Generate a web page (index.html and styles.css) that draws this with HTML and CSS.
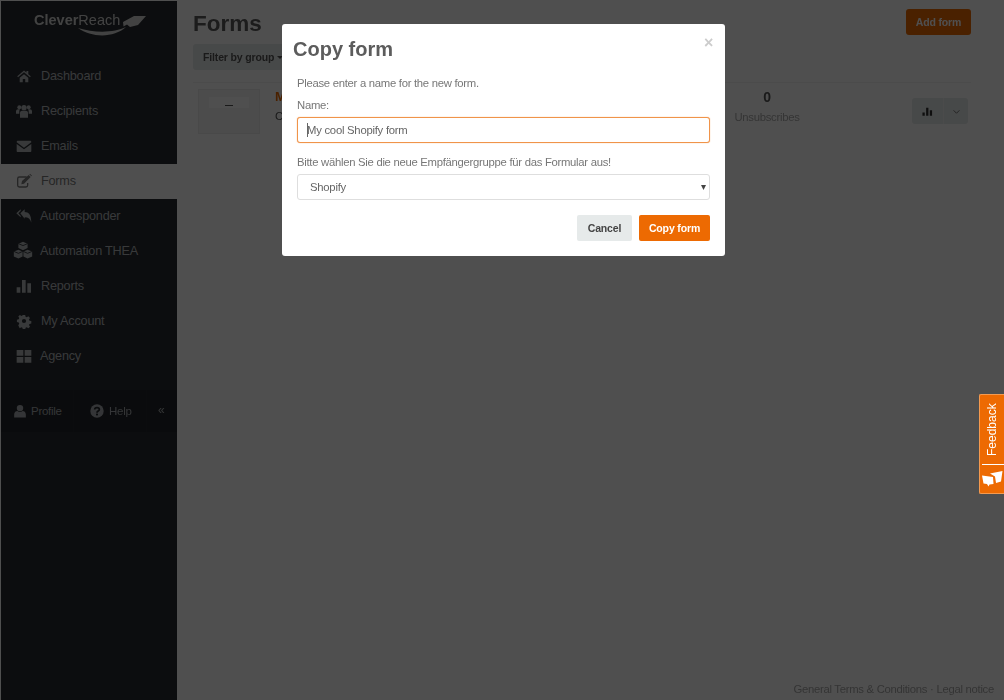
FILE: index.html
```html
<!DOCTYPE html>
<html lang="en">
<head>
<meta charset="utf-8">
<title>Forms</title>
<link rel="stylesheet" href="styles.css">
</head>
<body>
<div class="app">
  <aside class="sidebar">
    <div class="logo">
      <span class="logo-text"><b>Clever</b>Reach</span>
      <svg class="logo-mark" viewBox="0 0 112 24" width="112" height="24">
        <path d="M44 14C58 24 80 24 92 13 80 19 60 19 44 14Z"/>
        <path d="M89 8 100 2H112L104 11 96 13 93 10.500 89.500 12.500Z"/>
      </svg>
    </div>
    <nav class="nav">
      <a class="nav-item"><svg class="ico" viewBox="-1 -1 26 26"><path d="M12 3 1 12.500l1.300 1.500L12 6l9.700 8L23 12.500l-4-3.400V4h-3v2.500zM5 15l7-5.800 7 5.800v7h-5v-5h-4v5H5z"/></svg><span>Dashboard</span></a>
      <a class="nav-item"><svg class="ico" viewBox="0 0 24 24"><circle cx="5" cy="6.500" r="3"/><circle cx="19" cy="6.500" r="3"/><circle cx="12" cy="7" r="4"/><path d="M0 16v-3.500c0-2 1.500-3 3-3h3a5 5 0 0 0-1 3V16zM24 16v-3.500c0-2-1.500-3-3-3h-3a5 5 0 0 1 1 3V16zM6 22v-7.500c0-2 1.500-3 3-3h6c1.500 0 3 1 3 3V22z"/></svg><span>Recipients</span></a>
      <a class="nav-item"><svg class="ico" viewBox="0 0 24 24"><path d="M1 6.500V6C1 4.800 1.800 4 3 4h18c1.200 0 2 .8 2 2v.5l-11 8zM1 9l11 8 11-8v10.500c0 .8-.7 1.500-1.500 1.500h-19C1.700 21 1 20.300 1 19.500z"/></svg><span>Emails</span></a>
      <a class="nav-item is-active"><svg class="ico" viewBox="0 0 24 24"><path d="M5 5h11v2H5a1.500 1.500 0 0 0-1.500 1.500v10A1.500 1.500 0 0 0 5 20h10a1.500 1.500 0 0 0 1.500-1.500V15h2v3.500A3.500 3.500 0 0 1 15 22H5a3.500 3.500 0 0 1-3.500-3.500v-10A3.500 3.500 0 0 1 5 5z"/><path d="M9 12 19 3l3 3-10 10-4 .9zM20 2l1-1 3 3-1 1z"/></svg><span>Forms</span></a>
      <a class="nav-item nudge"><svg class="ico" viewBox="0 0 24 24"><path d="M7 2v2.500L3.500 8 7 11.500V14L.5 8zM13 2v4c6 0 10 4 10 16-1.500-5.500-4.500-8-10-8v2L6.500 8z"/></svg><span>Autoresponder</span></a>
      <a class="nav-item nudge"><svg class="ico wide" viewBox="0 0 24 24"><path d="M12 1l5.500 2.200v5.300L12 11 6.500 8.500V3.200zM6.500 10.500l5 2v6l-5 2.500L1 18.500v-6zM17.500 10.500l5.500 2v6L17.500 21l-5-2.500v-6z"/><path class="cube-line" d="M6.500 3.200 12 5.500l5.500-2.300M1 12.500l5.500 2.300 5-2.300M12.500 12.500l5 2.300 5.500-2.300"/></svg><span>Automation THEA</span></a>
      <a class="nav-item"><svg class="ico" viewBox="0 0 24 24"><path d="M1 14h5.500v8H1zM9 3h5.500v19H9zM17 8h5.500v14H17z"/></svg><span>Reports</span></a>
      <a class="nav-item"><svg class="ico" viewBox="0 0 24 24"><path fill-rule="evenodd" d="M10 2h4l.6 3 2 .9 2.600-1.700 2.800 2.800-1.700 2.600.9 2 3 .6v4l-3 .6-.9 2 1.700 2.600-2.800 2.800-2.600-1.700-2 .9-.6 3h-4l-.6-3-2-.9-2.600 1.700L2.400 19l1.700-2.600-.9-2-3-.6v-4l3-.6.9-2L2.400 4.600 5.200 1.800l2.600 1.700 2-.9zM12 8.500a3.500 3.500 0 1 0 0 7 3.500 3.500 0 0 0 0-7z" transform="translate(1.200 1.200) scale(.9)"/></svg><span>My Account</span></a>
      <a class="nav-item nudge"><svg class="ico" viewBox="0 0 24 24"><path d="M1 3h10v8.500H1zM13 3h10v8.500H13zM1 13.500h10V22H1zM13 13.500h10V22H13z"/></svg><span>Agency</span></a>
    </nav>
    <div class="side-foot">
      <a class="foot-link"><svg class="ico small" viewBox="0 0 24 24"><circle cx="12" cy="7" r="5.500"/><path d="M2 23v-5c0-4 3-6 5.500-6 3 2 6 2 9 0 2.500 0 5.500 2 5.500 6v5z"/></svg><span>Profile</span></a>
      <a class="foot-link help"><svg class="ico small" viewBox="0 0 24 24"><circle cx="12" cy="12" r="11.500"/><path class="q" d="M8 9.500C8 7 10 6 12 6s4 1.200 4 3.300c0 3-4 2.700-4 5.700"/><rect class="q-dot" x="10.300" y="16.500" width="3.400" height="3"/></svg><span>Help</span></a>
      <a class="foot-toggle">«</a>
    </div>
  </aside>

  <main class="main">
    <header class="page-head">
      <h1>Forms</h1>
      <button class="btn-add">Add form</button>
    </header>
    <div class="toolbar"><button class="btn-filter">Filter by group <i class="caret"></i></button></div>
    <section class="form-row">
      <div class="thumb"><div class="thumb-band"><i></i></div></div>
      <div class="form-info">
        <a class="form-name">My cool form</a>
        <span class="form-meta">Created</span>
      </div>
      <div class="stat"><strong>0</strong><span>Unsubscribes</span></div>
      <div class="row-actions">
        <button class="act"><svg viewBox="0 0 24 24" width="11" height="11"><path d="M1 14h5v7H1zM9 4h5v17H9zM17 9h5v12h-5z"/></svg></button>
        <button class="act act-more"><svg viewBox="0 0 12 12" width="7" height="7"><path d="M1 4l5 5 5-5" fill="none" stroke="currentColor" stroke-width="1.500"/></svg></button>
      </div>
    </section>
    <footer class="page-foot">General Terms &amp; Conditions · Legal notice</footer>
  </main>
</div>

<div class="backdrop"></div>

<div class="modal">
  <span class="close">×</span>
  <h2>Copy form</h2>
  <p class="intro">Please enter a name for the new form.</p>
  <label class="lbl" for="name">Name:</label>
  <div class="input-wrap">
    <input id="name" class="field field-focus" type="text" value="My cool Shopify form">
    <i class="text-caret"></i>
  </div>
  <label class="lbl lbl-gap" for="group">Bitte wählen Sie die neue Empfängergruppe für das Formular aus!</label>
  <div class="select-wrap">
    <select id="group" class="field field-select"><option>Shopify</option></select>
    <i class="select-arrow">▾</i>
  </div>
  <div class="modal-actions">
    <button class="btn btn-cancel">Cancel</button>
    <button class="btn btn-copy">Copy form</button>
  </div>
</div>

<aside class="feedback">
  <span class="feedback-text">Feedback</span>
  <svg class="feedback-icon" viewBox="0 0 22 18" width="22" height="18"><path d="M9 3.500 21.500 1 20 11.500l-5 1.500-1-6.500z"/><path d="M1 5.500l11 1.500.5 7-4 .5-1 2-1.500-2.500L2.500 13.500z"/></svg>
</aside>
</body>
</html>
```
FILE: styles.css
```css
* { box-sizing: border-box; }
html, body { height: 100%; }
body {
  margin: 0;
  padding: 1px 0 0 1px;
  background: #fff;
  color: #555;
  font-family: "Liberation Sans", Arial, sans-serif;
  font-size: 11.300px;
  letter-spacing: -.28px;
  overflow: hidden;
}
.app { display: flex; height: 699px; filter: blur(.35px); }

/* sidebar */
.sidebar {
  width: 176px;
  flex: none;
  background: #282b30;
  display: flex;
  flex-direction: column;
}
.logo { height: 58px; position: relative; padding: 10px 0 0 33px; color: #d6d6d6; }
.logo-text { font-size: 14.500px; line-height: 18px; display: block; letter-spacing: 0; }
.logo-mark { position: absolute; left: 33px; top: 13px; fill: currentColor; }
.nav { display: flex; flex-direction: column; }
.nav-item {
  height: 35px;
  display: flex;
  align-items: center;
  gap: 9px;
  padding: 0 0 2px 15px;
  font-size: 12.700px;
  letter-spacing: -.22px;
  color: #b4b8bc;
}
.nav-item.is-active { background: #fff; color: #7a7a7a; }
.nav-item.nudge { gap: 8px; }
.ico { width: 16px; height: 16px; fill: currentColor; flex: none; }
.ico.wide { width: 20px; height: 20px; margin: 0 -1px 0 -3px; }
.cube-line { fill: none; stroke: #282b30; stroke-width: 1; }
.side-foot {
  margin-top: 16px;
  height: 42px;
  background: #23262a;
  display: flex;
  align-items: center;
  color: #a8acb0;
  font-size: 11.500px;
}
.foot-link { display: flex; align-items: center; gap: 4px; height: 100%; }
.foot-link:first-child { width: 73px; padding-left: 12px; border-right: 1px solid #26292d; }
.foot-link.help { width: 73px; padding-left: 16px; gap: 5px; border-right: 1px solid #26292d; }
.ico.small { width: 14px; height: 14px; }
.q { fill: none; stroke: #23262a; stroke-width: 3; }
.q-dot { fill: #23262a; }
.foot-toggle { margin-left: 11px; font-size: 12px; line-height: 12px; padding-bottom: 3px; }

/* main */
.main { flex: 1; display: flex; flex-direction: column; padding: 8px 33px 0 16px; min-width: 0; }
.page-head { display: flex; justify-content: space-between; align-items: flex-start; }
h1 { margin: 0; font-size: 22.500px; line-height: 30px; color: #5c5c5c; font-weight: bold; letter-spacing: 0; }
.btn-add {
  width: 65px;
  height: 26px;
  border: 0;
  border-radius: 3px;
  background: #ed6a02;
  color: #fff;
  font: bold 10.500px "Liberation Sans", Arial, sans-serif;
  letter-spacing: -.15px;
  padding: 0 0 1px;
}
.toolbar { margin-top: 5px; padding-bottom: 12px; border-bottom: 1px solid #f2f2f2; }
.btn-filter {
  width: 110px;
  height: 26px;
  border: 0;
  border-radius: 3px;
  background: #e6eaea;
  color: #555;
  font: bold 10.500px "Liberation Sans", Arial, sans-serif;
  letter-spacing: -.15px;
  text-align: left;
  padding: 0 0 0 10px;
}
.caret { display: inline-block; border: 3px solid transparent; border-top-color: #555; border-bottom: 0; vertical-align: 2px; }
.form-row { display: flex; align-items: flex-start; padding: 6px 3px 0 5px; }
.thumb {
  width: 62px;
  height: 45px;
  flex: none;
  border: 1px solid #ebebeb;
  background: #f6f6f6;
  padding-top: 7px;
}
.thumb-band { height: 11px; margin: 0 10px; background: #fff; display: flex; align-items: flex-end; justify-content: center; }
.thumb-band i { width: 8px; height: 1px; background: #555; margin-bottom: 2px; }
.form-info { width: 472px; flex: none; padding: 0 0 0 15px; display: flex; flex-direction: column; gap: 4px; }
.form-name { color: #ed6a02; font-weight: bold; font-size: 13px; line-height: 16px; }
.form-meta { line-height: 14px; font-size: 11.500px; }
.stat { width: 70px; flex: none; display: flex; flex-direction: column; align-items: center; gap: 6px; color: #aaa; }
.stat strong { color: #555; font-size: 14px; line-height: 16px; }
.stat span { font-size: 11.300px; white-space: nowrap; }
.row-actions { margin: 9px 0 0 auto; display: flex; }
.act { width: 31px; height: 26px; border: 0; background: #e6eaea; padding: 0; color: #444; fill: #333; border-radius: 3px 0 0 3px; }
.act svg { display: block; margin: auto; }
.act-more { width: 25px; border-radius: 0 3px 3px 0; border-left: 1px solid #f0f2f2; color: #666; }
.page-foot { margin-top: auto; padding: 0 10px 4px 0; text-align: right; color: #a8a8a8; font-size: 11.300px; line-height: 14px; margin-right: -33px; }

/* overlay */
.backdrop { position: fixed; inset: 0; background: rgba(0, 0, 0, .69); }
.modal {
  position: fixed;
  left: 282px;
  top: 24px;
  width: 443px;
  height: 232px;
  background: #fff;
  border-radius: 3px;
  padding: 13px 15px 0 15px;
  color: #777;
  filter: blur(.35px);
}
.close { position: absolute; right: 12px; top: 10px; font-size: 16px; line-height: 18px; font-weight: bold; color: #ccc; }
h2 { margin: 0 0 0 -4px; font-size: 20px; line-height: 25px; color: #5c5c5c; letter-spacing: 0; }
.intro { margin: 14px 0 0; line-height: 14px; }
.lbl { display: block; line-height: 14px; margin-top: 8px; }
.lbl-gap { margin-top: 12px; }
.input-wrap, .select-wrap { position: relative; margin-top: 5px; }
.field {
  display: block;
  width: 100%;
  height: 26px;
  border: 1px solid #dedede;
  border-radius: 3px;
  background: #fff;
  color: #666;
  font: 11.300px "Liberation Sans", Arial, sans-serif;
  letter-spacing: -.25px;
  padding: 0 9px;
  outline: 0;
}
.field-focus { border-color: #f0944a; box-shadow: 0 0 1px #f0944a; }
.text-caret { position: absolute; left: 10px; top: 6px; width: 1px; height: 14px; background: #666; }
.field-select { appearance: none; padding-left: 12px; }
.select-arrow { position: absolute; right: 4px; top: 6px; font-style: normal; font-size: 10px; line-height: 14px; color: #444; }
.modal-actions { display: flex; justify-content: flex-end; gap: 7px; margin-top: 15px; }
.btn { height: 26px; border: 0; border-radius: 2px; font: bold 10.500px "Liberation Sans", Arial, sans-serif; letter-spacing: -.15px; padding: 0 0 1px; }
.btn-cancel { width: 55px; background: #e6eaea; color: #444; }
.btn-copy { width: 71px; background: #ed6a02; color: #fff; }

.feedback {
  position: fixed;
  left: 979px;
  top: 394px;
  width: 25px;
  height: 100px;
  background: #ed6a02;
  border: 1px solid #f49a50;
  border-right: 0;
  border-radius: 2px 0 0 2px;
  color: #fff;
  display: flex;
  flex-direction: column;
  align-items: center;
  filter: blur(.3px);
}
.feedback-text {
  writing-mode: vertical-rl;
  transform: rotate(180deg);
  font-size: 12px;
  letter-spacing: 0;
  height: 69px;
  padding-top: 8px;
  line-height: 24px;
}
.feedback-icon { margin-top: 6px; fill: #fff; }
.feedback::after { content: ""; position: absolute; left: 2px; right: 0; top: 69px; height: 1px; background: #fff; }
```
